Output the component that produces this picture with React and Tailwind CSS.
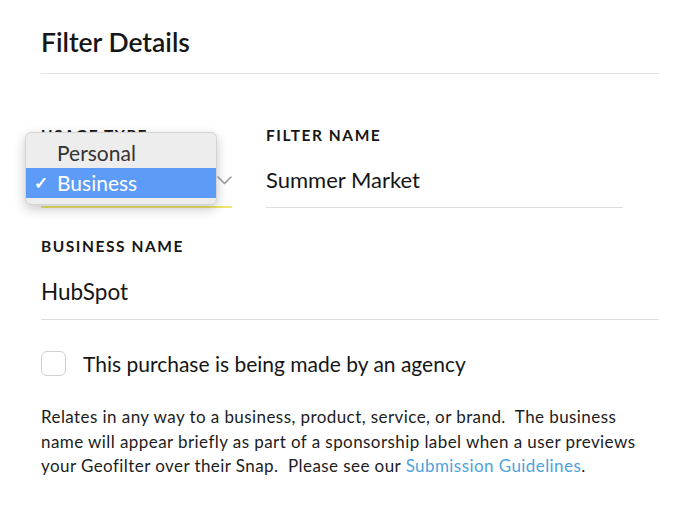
import React from 'react';

// Chevron for the closed select
const Chevron = () => (
    <svg width="15" height="9" viewBox="0 0 15 9" fill="none">
        <path d="M1 1l6.5 6.5L14 1" stroke="#9a9a9a" strokeWidth="1.6" strokeLinecap="round" strokeLinejoin="round" />
    </svg>
);

const Label = ({ children }) => (
    <div className="text-[15.5px] leading-[20px] font-bold tracking-[0.1em] text-[#161616]">{children}</div>
);

const App = () => {
    return (
        <div className="w-[700px] h-[530px] bg-white px-[41px] font-['Lato',sans-serif] text-[#161616] overflow-hidden">
            {/* Header */}
            <div className="pt-[27px] pb-[15px] border-b border-[#e2e2e2]">
                <h1 className="text-[26.5px] leading-[31px] font-semibold">Filter Details</h1>
            </div>

            {/* Usage type + filter name */}
            <div className="mt-[51px] flex gap-[34px]">
                <div className="relative w-[191px]">
                    <Label>USAGE TYPE</Label>
                    <div className="mt-[20px] pb-[11px] h-[43px] flex items-center justify-end border-b-2 border-[#efe56a]">
                        <Chevron />
                    </div>

                    {/* Open select menu */}
                    <div className="absolute left-[-16px] top-[7px] w-[192px] h-[73px] rounded-[6px] bg-[#ededed] border border-[#d4d4d4] shadow-[0_4px_12px_rgba(0,0,0,0.22)] pt-[5px] overflow-hidden">
                        <div className="h-[30px] flex items-center pl-[31px] text-[21px] text-[#333]">Personal</div>
                        <div className="h-[30px] flex items-center bg-[#5c9bf7] text-white text-[21px]">
                            <span className="w-[31px] pl-[8px] text-[17px] font-bold">✓</span>
                            <span>Business</span>
                        </div>
                    </div>
                </div>

                <div className="w-[357px]">
                    <Label>FILTER NAME</Label>
                    <div className="mt-[20px] pb-[12px] text-[22px] leading-[30px] border-b border-[#dedede]">Summer Market</div>
                </div>
            </div>

            {/* Business name */}
            <div className="mt-[28px]">
                <Label>BUSINESS NAME</Label>
                <div className="mt-[21px] pb-[12px] text-[22.5px] leading-[30px] border-b border-[#dedede]">HubSpot</div>
            </div>

            {/* Agency checkbox */}
            <div className="mt-[31px] flex items-center gap-[17px]">
                <div className="w-[25px] h-[25px] rounded-[6px] border border-[#d0d0d0] bg-white" />
                <span className="text-[21px] leading-[25px]">This purchase is being made by an agency</span>
            </div>

            <p className="mt-[29px] w-[605px] text-[17px] leading-[24.5px] tracking-[0.025em] text-[#1c1c1c]">
                Relates in any way to a business, product, service, or brand.&nbsp; The business name will appear briefly as part of a sponsorship label when a user previews your Geofilter over their Snap.&nbsp; Please see our <span className="text-[#4ea3dc]">Submission Guidelines</span>.
            </p>
        </div>
    );
};

export default App;
